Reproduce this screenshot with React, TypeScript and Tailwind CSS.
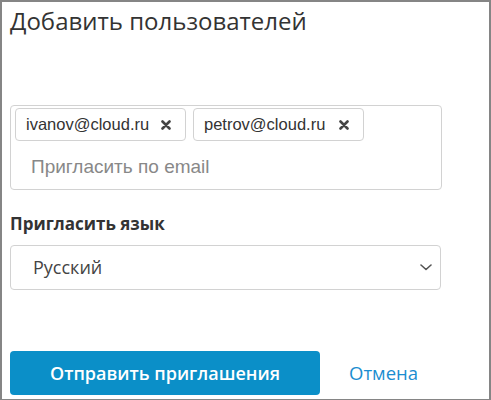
import React from 'react';

const EMAILS = ['ivanov@cloud.ru', 'petrov@cloud.ru'];

const Cross = () => (
  <svg width="10" height="10" viewBox="0 0 10 10" className="shrink-0">
    <path d="M1.5 1.5 L8.5 8.5 M8.5 1.5 L1.5 8.5" stroke="#444" strokeWidth="2.6" strokeLinecap="round" />
  </svg>
);

const Chevron = () => (
  <svg width="12" height="7" viewBox="0 0 12 7">
    <path d="M1 1 L6 5.5 L11 1" fill="none" stroke="#555" strokeWidth="1.6" strokeLinecap="round" strokeLinejoin="round" />
  </svg>
);

const App = () => {
  return (
    <div className="w-[491px] h-[400px] bg-white border-x-2 border-t-2 border-b border-[#858585] px-2 pt-[3px] font-['Open_Sans',sans-serif]">
      <h1 className="text-[24px] leading-[32px] text-[#333] font-normal">Добавить пользователей</h1>

      <div className="mt-[68px] w-[432px] h-[85px] border border-[#d2d2d2] rounded-[4px] pt-[2px] pl-[4px]">
        <div className="flex gap-[7px]">
          {EMAILS.map((email) => (
            <div
              key={email}
              className="flex items-center h-[33px] w-[171px] pl-[10px] border border-[#d2d2d2] rounded-[4px] font-['Liberation_Sans',Arial,sans-serif] text-[16.5px] text-[#333]"
            >
              <span>{email}</span>
              <span className="ml-auto mr-[14px]">
                <Cross />
              </span>
            </div>
          ))}
        </div>
        <div className="pl-[16px] mt-[15px] font-['Liberation_Sans',Arial,sans-serif] text-[19px] leading-[22px] text-[#888]">
          Пригласить по email
        </div>
      </div>

      <div className="mt-[22px] text-[17px] leading-[24px] font-bold text-[#333]">Пригласить язык</div>

      <div className="mt-[9px] w-[431px] h-[45px] border border-[#d2d2d2] rounded-[4px] flex items-center pl-[22px] pr-[8px]">
        <span className="text-[18px] text-[#444]">Русский</span>
        <span className="ml-auto">
          <Chevron />
        </span>
      </div>

      <div className="mt-[61px] flex items-center">
        <button className="w-[310px] h-[44px] rounded-[4px] bg-[#0b8fc8] text-white text-[18px] font-semibold">
          Отправить приглашения
        </button>
        <button className="ml-[29px] text-[18.5px] text-[#1a8dd0]">Отмена</button>
      </div>
    </div>
  );
};

export default App;
